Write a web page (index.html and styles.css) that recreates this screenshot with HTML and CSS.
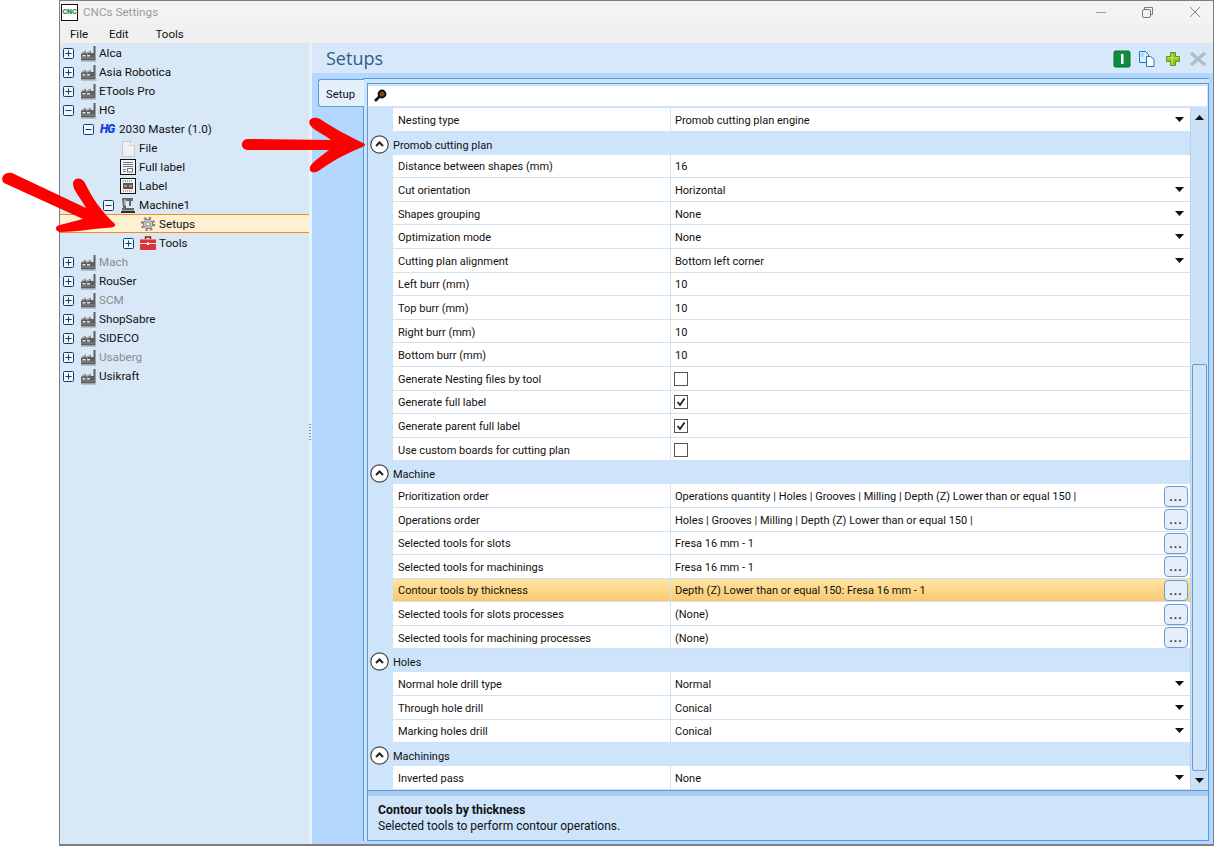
FILE: index.html

```html
<!DOCTYPE html>
<html lang="en">
<head>
    <meta charset="UTF-8">
    <title>CNCs Settings</title>
    <link rel="stylesheet" href="styles.css">
</head>
<body>
    <svg class="sprites" width="0" height="0">
        <symbol id="i-plus" viewBox="0 0 11 11"><rect x=".5" y=".5" width="10" height="10" rx="1" fill="#eef5fc" stroke="#0f3f6e"/><path d="M2.500 5.500h6M5.500 2.500v6" stroke="#0f3f6e"/></symbol>
        <symbol id="i-minus" viewBox="0 0 11 11"><rect x=".5" y=".5" width="10" height="10" rx="1" fill="#eef5fc" stroke="#0f3f6e"/><path d="M2.500 5.500h6" stroke="#0f3f6e"/></symbol>
        <symbol id="i-factory" viewBox="0 0 17 17"><path d="M1 15.500V9l1-1.500 4-2v2.500l5-2.500v2.500h2.500V1h2v14.500z" fill="#5f5f5f"/><path d="M1.500 8.500l4.500-2M6.500 8.500l4.500-2" stroke="#bcbcbc" fill="none"/><path d="M2.500 10h3v1.500h-3zM7 10h3v1.500h-3z" fill="#e4e4e4"/><path d="M1 13h15" stroke="#8c8c8c"/><path d="M1 16.500h15.500" stroke="#b4c2cf"/></symbol>
        <symbol id="i-file" viewBox="0 0 17 17"><path d="M2.500 1.500h8l4 4v11h-12z" fill="#f1f1f1" stroke="#c8c8c8"/><path d="M10.500 1.500v4h4" fill="#fff" stroke="#c8c8c8"/></symbol>
        <symbol id="i-full" viewBox="0 0 17 17"><rect x=".5" y=".5" width="15" height="15" fill="#f4f4f4" stroke="#111"/><path d="M3 3.500h10M3 5.500h10M3 7.500h10M3 10.500h3M3 12.500h3" stroke="#6a7a88"/><rect x="7.500" y="9.500" width="5" height="3.500" fill="none" stroke="#6a7a88"/></symbol>
        <symbol id="i-label" viewBox="0 0 17 17"><rect x=".5" y=".5" width="15" height="15" fill="#f4f4f4" stroke="#111"/><path d="M3 3h10" stroke="#555" stroke-dasharray="1 1"/><rect x="3" y="5" width="10" height="6" fill="#555"/><path d="M4 8h3M9 8h3" stroke="#eee"/><path d="M3 13h10" stroke="#d22" stroke-dasharray="1 1"/></symbol>
        <symbol id="i-machine" viewBox="0 0 17 17"><path d="M2 1h11v3h-2v5H9V4H6v7h8v2.500H2V11h1z" fill="#666"/><path d="M4 2.500h2v6H4z" fill="#aab6c2"/><path d="M1 14h14v2H1z" fill="#333"/></symbol>
        <symbol id="i-gear" viewBox="0 0 17 17"><circle cx="8" cy="8" r="6" fill="none" stroke="#8d8d8d" stroke-width="2.600" stroke-dasharray="2.400 2.312"/><circle cx="8" cy="8" r="4.600" fill="#d0d0d0" stroke="#777"/><circle cx="8" cy="8" r="2.200" fill="#fff4da" stroke="#777"/></symbol>
        <symbol id="i-toolbox" viewBox="0 0 17 17"><path d="M5.500 4V2h5v2" fill="none" stroke="#8a1a1a" stroke-width="1.400"/><rect y="4" width="16" height="11" rx="1" fill="#d9363a"/><path d="M0 8.500h16" stroke="#fbdcdc"/><path d="M0 4.500h16" stroke="#f07a7a"/><rect x="7" y="7.500" width="2" height="2.500" fill="#fff"/></symbol>
        <symbol id="i-collapse" viewBox="0 0 19 19"><circle cx="9.500" cy="9.500" r="8.700" fill="#fff" stroke="#444" stroke-width="1.200"/><path d="M6 11l3.500-3.500L13 11" fill="none" stroke="#222" stroke-width="2"/></symbol>
        <symbol id="i-more" viewBox="0 0 9 5"><path d="M0 0h9L4.500 5z" fill="#111"/></symbol>
        <symbol id="i-check" viewBox="0 0 14 14"><rect x=".5" y=".5" width="13" height="13" fill="#fff" stroke="#555"/><path d="M3.500 7l2.500 3 4.500-6.500" fill="none" stroke="#222" stroke-width="1.800"/></symbol>
        <symbol id="i-uncheck" viewBox="0 0 14 14"><rect x=".5" y=".5" width="13" height="13" fill="#fff" stroke="#555"/></symbol>
    </svg>

    <div class="window">
        <div class="titlebar">
            <div class="app-icon">CNC</div>
            <div class="app-title">CNCs Settings</div>
            <div class="win-btns">
                <svg width="12" height="12" viewBox="0 0 12 12"><path d="M1 6.500h10" stroke="#999"/></svg>
                <svg width="12" height="12" viewBox="0 0 12 12"><path d="M2.500 3.500V1.500h8v7h-2" fill="none" stroke="#777"/><rect x=".5" y="3.500" width="8" height="8" rx="1.500" fill="none" stroke="#777"/></svg>
                <svg width="12" height="12" viewBox="0 0 12 12"><path d="M1 1l10 10M11 1L1 11" stroke="#888"/></svg>
            </div>
        </div>
        <div class="menubar">
            <span class="menu-file">File</span>
            <span class="menu-edit">Edit</span>
            <span>Tools</span>
        </div>

        <div class="main">
            <div class="tree">
                <div class="node"><svg class="exp"><use href="#i-plus"/></svg><svg class="ico"><use href="#i-factory"/></svg>Alca</div>
                <div class="node"><svg class="exp"><use href="#i-plus"/></svg><svg class="ico"><use href="#i-factory"/></svg>Asia Robotica</div>
                <div class="node"><svg class="exp"><use href="#i-plus"/></svg><svg class="ico"><use href="#i-factory"/></svg>ETools Pro</div>
                <div class="node"><svg class="exp"><use href="#i-minus"/></svg><svg class="ico"><use href="#i-factory"/></svg>HG</div>
                <div class="node lv1"><svg class="exp"><use href="#i-minus"/></svg><span class="hg-logo">HG</span>2030 Master (1.0)</div>
                <div class="node lv2"><span class="no-exp"></span><svg class="ico"><use href="#i-file"/></svg>File</div>
                <div class="node lv2"><span class="no-exp"></span><svg class="ico"><use href="#i-full"/></svg>Full label</div>
                <div class="node lv2"><span class="no-exp"></span><svg class="ico"><use href="#i-label"/></svg>Label</div>
                <div class="node lv2"><svg class="exp"><use href="#i-minus"/></svg><svg class="ico"><use href="#i-machine"/></svg>Machine1</div>
                <div class="node lv3 selected"><span class="no-exp"></span><svg class="ico"><use href="#i-gear"/></svg>Setups</div>
                <div class="node lv3"><svg class="exp"><use href="#i-plus"/></svg><svg class="ico"><use href="#i-toolbox"/></svg>Tools</div>
                <div class="node off"><svg class="exp"><use href="#i-plus"/></svg><svg class="ico"><use href="#i-factory"/></svg>Mach</div>
                <div class="node"><svg class="exp"><use href="#i-plus"/></svg><svg class="ico"><use href="#i-factory"/></svg>RouSer</div>
                <div class="node off"><svg class="exp"><use href="#i-plus"/></svg><svg class="ico"><use href="#i-factory"/></svg>SCM</div>
                <div class="node"><svg class="exp"><use href="#i-plus"/></svg><svg class="ico"><use href="#i-factory"/></svg>ShopSabre</div>
                <div class="node"><svg class="exp"><use href="#i-plus"/></svg><svg class="ico"><use href="#i-factory"/></svg>SIDECO</div>
                <div class="node off"><svg class="exp"><use href="#i-plus"/></svg><svg class="ico"><use href="#i-factory"/></svg>Usaberg</div>
                <div class="node"><svg class="exp"><use href="#i-plus"/></svg><svg class="ico"><use href="#i-factory"/></svg>Usikraft</div>
            </div>
            <div class="splitter"><span class="grip"></span></div>

            <div class="content">
                <div class="content-head">
                    <h1 class="content-title">Setups</h1>
                    <div class="toolbar">
                        <svg width="18" height="18" viewBox="0 0 18 18"><rect x="1" y="1" width="16" height="16" rx="1.500" fill="#0c8f3c" stroke="#0a6b2e"/><rect x="8" y="4" width="2.500" height="10" fill="#fff"/></svg>
                        <svg width="18" height="18" viewBox="0 0 18 18"><path d="M1.500 1.500h6l3 3v8h-9z" fill="#d8ecfa" stroke="#0f7fc0"/><path d="M8.500 6.500h4l3.500 3v7H8.500z" fill="#fff" stroke="#0f7fc0"/><path d="M3 4h3M3 6h3" stroke="#8cc4e8"/></svg>
                        <svg width="18" height="18" viewBox="0 0 18 18"><path d="M6.500 2.500h5v4h4v5h-4v4h-5v-4h-4v-5h4z" fill="#8fc31f" stroke="#5f9a0d"/><path d="M8 4v11M3 8h12" stroke="#c9ea6a"/></svg>
                        <svg width="18" height="18" viewBox="0 0 18 18"><path d="M2 3l14 12M16 3L2 15" stroke="#b4bcc4" stroke-width="3.400"/></svg>
                    </div>
                </div>
                <div class="tabs">
                    <div class="tab">Setup</div>
                    <div class="tab-box">
                        <div class="inner">
                            <div class="search">
                                <svg width="14" height="14" viewBox="0 0 14 14"><circle cx="9" cy="5" r="3.500" fill="#7a4a14" stroke="#111" stroke-width="1.800"/><path d="M6.500 7.500L2 12" stroke="#111" stroke-width="2.600"/></svg>
                            </div>
                            <div class="grid-wrap">
                                <div class="props">
                                    <div class="row"><div class="name">Nesting type</div><div class="val">Promob cutting plan engine<svg class="arrow"><use href="#i-more"/></svg></div></div>

                                    <div class="group"><svg class="collapse"><use href="#i-collapse"/></svg><span class="group-name">Promob cutting plan</span></div>
                                    <div class="row"><div class="name">Distance between shapes (mm)</div><div class="val">16</div></div>
                                    <div class="row"><div class="name">Cut orientation</div><div class="val">Horizontal<svg class="arrow"><use href="#i-more"/></svg></div></div>
                                    <div class="row"><div class="name">Shapes grouping</div><div class="val">None<svg class="arrow"><use href="#i-more"/></svg></div></div>
                                    <div class="row"><div class="name">Optimization mode</div><div class="val">None<svg class="arrow"><use href="#i-more"/></svg></div></div>
                                    <div class="row"><div class="name">Cutting plan alignment</div><div class="val">Bottom left corner<svg class="arrow"><use href="#i-more"/></svg></div></div>
                                    <div class="row"><div class="name">Left burr (mm)</div><div class="val">10</div></div>
                                    <div class="row"><div class="name">Top burr (mm)</div><div class="val">10</div></div>
                                    <div class="row"><div class="name">Right burr (mm)</div><div class="val">10</div></div>
                                    <div class="row"><div class="name">Bottom burr (mm)</div><div class="val">10</div></div>
                                    <div class="row"><div class="name">Generate Nesting files by tool</div><div class="val"><svg class="check"><use href="#i-uncheck"/></svg></div></div>
                                    <div class="row"><div class="name">Generate full label</div><div class="val"><svg class="check"><use href="#i-check"/></svg></div></div>
                                    <div class="row"><div class="name">Generate parent full label</div><div class="val"><svg class="check"><use href="#i-check"/></svg></div></div>
                                    <div class="row"><div class="name">Use custom boards for cutting plan</div><div class="val"><svg class="check"><use href="#i-uncheck"/></svg></div></div>

                                    <div class="group"><svg class="collapse"><use href="#i-collapse"/></svg><span class="group-name">Machine</span></div>
                                    <div class="row"><div class="name">Prioritization order</div><div class="val">Operations quantity | Holes | Grooves | Milling | Depth (Z) Lower than or equal 150 |<button class="dots">...</button></div></div>
                                    <div class="row"><div class="name">Operations order</div><div class="val">Holes | Grooves | Milling | Depth (Z) Lower than or equal 150 |<button class="dots">...</button></div></div>
                                    <div class="row"><div class="name">Selected tools for slots</div><div class="val">Fresa 16 mm - 1<button class="dots">...</button></div></div>
                                    <div class="row"><div class="name">Selected tools for machinings</div><div class="val">Fresa 16 mm - 1<button class="dots">...</button></div></div>
                                    <div class="row active"><div class="name">Contour tools by thickness</div><div class="val">Depth (Z) Lower than or equal 150: Fresa 16 mm - 1<button class="dots">...</button></div></div>
                                    <div class="row"><div class="name">Selected tools for slots processes</div><div class="val">(None)<button class="dots">...</button></div></div>
                                    <div class="row"><div class="name">Selected tools for machining processes</div><div class="val">(None)<button class="dots">...</button></div></div>

                                    <div class="group"><svg class="collapse"><use href="#i-collapse"/></svg><span class="group-name">Holes</span></div>
                                    <div class="row"><div class="name">Normal hole drill type</div><div class="val">Normal<svg class="arrow"><use href="#i-more"/></svg></div></div>
                                    <div class="row"><div class="name">Through hole drill</div><div class="val">Conical<svg class="arrow"><use href="#i-more"/></svg></div></div>
                                    <div class="row"><div class="name">Marking holes drill</div><div class="val">Conical<svg class="arrow"><use href="#i-more"/></svg></div></div>

                                    <div class="group"><svg class="collapse"><use href="#i-collapse"/></svg><span class="group-name">Machinings</span></div>
                                    <div class="row"><div class="name">Inverted pass</div><div class="val">None<svg class="arrow"><use href="#i-more"/></svg></div></div>
                                </div>
                                <div class="scrollbar">
                                    <svg class="sb-arrow sb-up"><use href="#i-more"/></svg>
                                    <div class="sb-thumb"></div>
                                    <svg class="sb-arrow"><use href="#i-more"/></svg>
                                </div>
                            </div>
                            <div class="desc">
                                <div class="desc-title">Contour tools by thickness</div>
                                <div>Selected tools to perform contour operations.</div>
                            </div>
                        </div>
                    </div>
                </div>
            </div>
        </div>
    </div>

    <!-- painted arrows on top of the screenshot -->
    <svg class="marks" width="1214" height="846" viewBox="0 0 1214 846">
        <g fill="#f00">
            <path d="M247 139L331 140C324 134 314 131 310 125C307 119 314 116 320 119C333 128 349 136 365 144C366 146 362 147 358 149C343 155 331 162 320 170C313 175 307 171 311 165C316 159 323 155 329 150L247 150C240 149 240 140 247 139Z"/>
            <path d="M12 173L86 208C80 197 73 190 73 184C73 178 81 176 85 183C92 198 102 212 115 224C116 227 112 228 105 228C90 229 75 232 61 232C55 232 54 226 60 225L83 219L4 183C-1 178 5 171 12 173Z"/>
        </g>
    </svg>
</body>
</html>
```

FILE: styles.css

```css
* {
    margin: 0;
    padding: 0;
    box-sizing: border-box;
}
body {
    background: #fff;
    font-family: 'Roboto', 'Open Sans', sans-serif;
    font-size: 11px;
    color: #111;
    height: 846px;
    overflow: hidden;
}
.sprites {
    display: block;
    height: 0;
}
.window {
    margin-left: 59px;
    height: 846px;
    border: 1px solid #7f7f7f;
    border-bottom-width: 2px;
    display: flex;
    flex-direction: column;
    background: #f0f0f0;
}
.titlebar {
    height: 22px;
    flex: none;
    display: flex;
    align-items: center;
    background: #f3f3f3;
    padding-left: 1px;
}
.app-icon {
    width: 17px;
    height: 17px;
    border: 1px solid #111;
    background: #fff;
    color: #0a7d2c;
    font-size: 7px;
    font-weight: 700;
    line-height: 15px;
    text-align: center;
}
.app-title {
    margin-left: 5px;
    font-size: 11.7px;
    color: #9a9a9a;
}
.win-btns {
    margin-left: auto;
    display: flex;
    gap: 35px;
    padding-right: 12px;
}
.menubar {
    height: 20px;
    flex: none;
    display: flex;
    align-items: center;
    padding: 1px 0 0 10px;
    background: #f0f0f0;
    font-size: 11.5px;
}
.menu-file {
    margin-right: 21px;
}
.menu-edit {
    margin-right: 27px;
}
.main {
    flex: 1;
    display: flex;
    min-height: 0;
}

/* left tree */
.tree {
    width: 249px;
    flex: none;
    background: #d8e8f7;
    font-size: 11.7px;
}
.node {
    height: 19px;
    display: flex;
    align-items: center;
    padding-left: 3px;
    padding-top: 1px;
    white-space: nowrap;
}
.node.lv1 { padding-left: 23px; }
.node.lv2 { padding-left: 43px; }
.node.lv3 { padding-left: 63px; }
.node.off { color: #8c8c8c; }
.node.selected {
    background: #fff0d2;
    border-top: 1px solid #f58a1f;
    border-bottom: 1px solid #f58a1f;
}
.exp {
    width: 11px;
    height: 11px;
    flex: none;
}
.no-exp {
    width: 11px;
    flex: none;
}
.ico {
    width: 17px;
    height: 17px;
    flex: none;
    margin: 0 2px 0 6px;
}
.hg-logo {
    width: 16px;
    margin: 0 3px 0 6px;
    color: #1740e0;
    font-size: 12px;
    font-weight: 900;
    font-style: italic;
    letter-spacing: -1px;
}
.splitter {
    width: 3px;
    flex: none;
    background: #eaf1f8;
    display: flex;
    align-items: center;
}
.grip {
    width: 2px;
    height: 16px;
    margin-bottom: 24px;
    background: repeating-linear-gradient(#7c8894 0 1px, transparent 1px 3px);
}

/* right side */
.content {
    flex: 1;
    min-width: 0;
    background: #b3d7fe;
    display: flex;
    flex-direction: column;
}
.content-head {
    height: 30px;
    flex: none;
    background: #d6e8f9;
    display: flex;
    align-items: center;
    justify-content: space-between;
    padding: 0 6px 0 14px;
}
.content-title {
    font-family: 'Open Sans', sans-serif;
    font-size: 18px;
    font-weight: 400;
    color: #2f5d80;
}
.toolbar {
    display: flex;
    gap: 7.5px;
    margin-top: 1px;
}
.tabs {
    flex: 1;
    display: flex;
    align-items: flex-start;
    padding: 5px 4px 3px 6px;
    min-height: 0;
}
.tab {
    width: 46px;
    height: 28px;
    margin-top: 1px;
    margin-right: -1px;
    background: #e4f0fc;
    border: 1px solid #5b9bd5;
    border-right: none;
    border-radius: 3px 0 0 3px;
    padding-right: 2px;
    font-size: 11.3px;
    line-height: 29px;
    text-align: center;
    position: relative;
    z-index: 1;
}
.tab-box {
    flex: 1;
    align-self: stretch;
    min-width: 0;
    border-left: 1px solid #5b9bd5;
    border-top: 1px solid #5b9bd5;
    background: #cde4fb;
    padding: 4px 0 0 3px;
}
.inner {
    height: 100%;
    border: 1px solid #5b9bd5;
    display: flex;
    flex-direction: column;
}
.search {
    height: 20px;
    margin: 2px 1px 2px 0;
    flex: none;
    background: #fff;
    display: flex;
    align-items: center;
    padding-left: 5px;
}
.grid-wrap {
    height: 682px;
    flex: none;
    display: flex;
}
.props {
    flex: 1;
    min-width: 0;
}
.row {
    height: 23.6px;
    margin-left: 25px;
    display: grid;
    grid-template-columns: 278px 1fr;
    background: #fff;
    border-bottom: 1px solid #cfe2f5;
}
.name {
    display: flex;
    align-items: center;
    padding-left: 5px;
    padding-top: 2px;
    border-right: 1px solid #cfe2f5;
    white-space: nowrap;
}
.val {
    display: flex;
    align-items: center;
    padding: 2px 2px 0 4px;
    white-space: nowrap;
    min-width: 0;
}
.row.active {
    background: linear-gradient(#ffe5a3, #fbc96e);
}
.group {
    height: 21px;
    margin-top: 2px;
    background: #cde4fb;
    display: flex;
    align-items: center;
    padding-left: 2px;
    border-radius: 2px 2px 0 0;
}
.group-name {
    padding-top: 2px;
}
.collapse {
    width: 19px;
    height: 19px;
    margin-right: 4px;
    flex: none;
}
.arrow {
    width: 9px;
    height: 5px;
    margin-left: auto;
    margin-right: 4px;
    margin-top: -2px;
    flex: none;
}
.check {
    width: 14px;
    height: 14px;
    margin-left: -1px;
    margin-top: -1px;
    flex: none;
}
.dots {
    margin-left: auto;
    margin-top: -1px;
    width: 24px;
    height: 21px;
    flex: none;
    background: #e4eefa;
    border: 1px solid #6f9ccb;
    border-radius: 4px;
    font-family: inherit;
    font-size: 12px;
    font-weight: 700;
    letter-spacing: 1px;
    line-height: 20px;
    color: #333;
}
.scrollbar {
    width: 17px;
    flex: none;
    margin-right: 1px;
    background: #c9e0f7;
    border-left: 1px solid #b9d3ec;
    display: flex;
    flex-direction: column;
    align-items: center;
}
.sb-arrow {
    width: 9px;
    height: 5px;
    flex: none;
    margin: 0 0 6px;
}
.sb-up {
    transform: rotate(180deg);
    margin: 7px 0 0;
}
.sb-thumb {
    width: 15px;
    height: 407px;
    margin-top: 244px;
    margin-bottom: 7px;
    background: #cde4fb;
    border: 1px solid #6a9bcb;
    border-radius: 2px;
    flex: none;
}
.desc {
    flex: 1;
    border-top: 1px solid #5b9bd5;
    background: #cde4fb;
    box-shadow: inset 0 5px 0 #a8caeb;
    padding: 11px 0 0 10px;
    font-size: 12px;
    line-height: 16px;
}
.desc-title {
    font-size: 12.3px;
    font-weight: 700;
}
.marks {
    position: absolute;
    left: 0;
    top: 0;
    pointer-events: none;
}
```
